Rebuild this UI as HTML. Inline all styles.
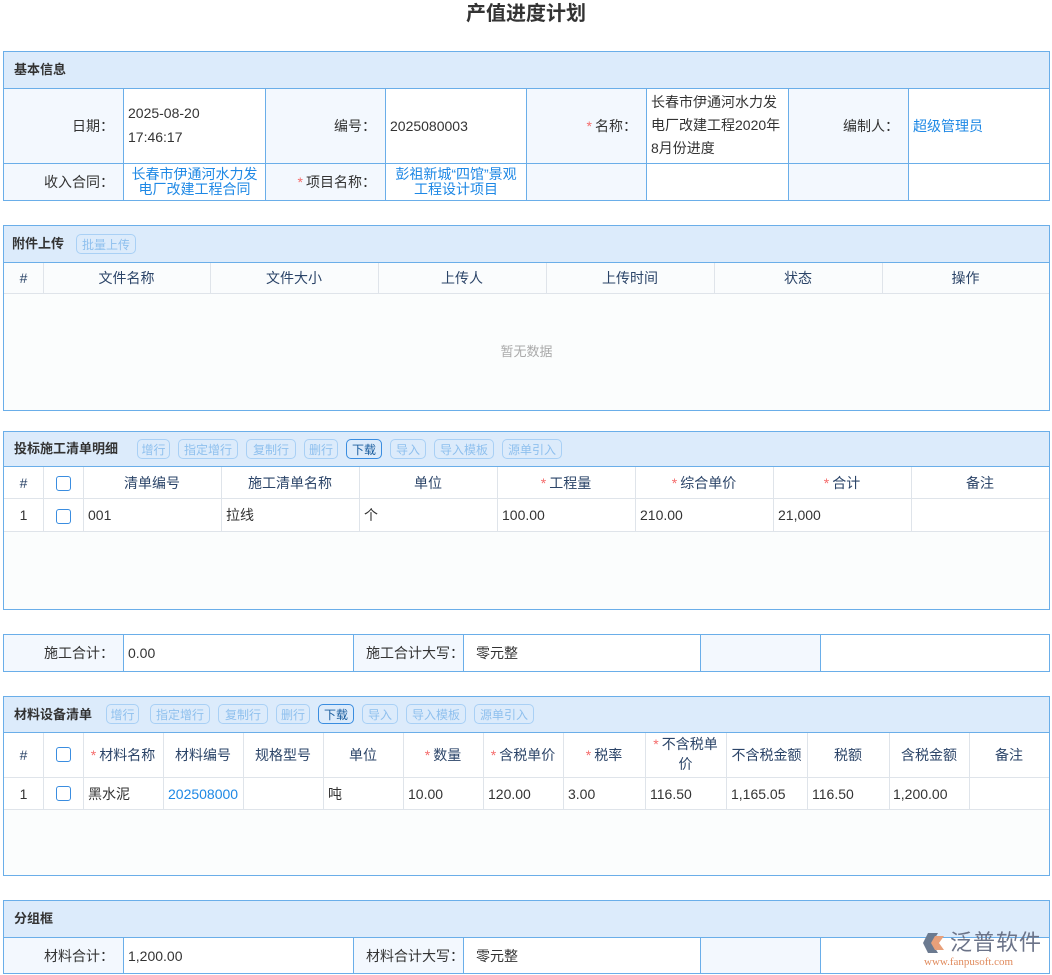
<!DOCTYPE html>
<html><head><meta charset="utf-8"><style>
body{margin:0;width:1052px;height:975px;background:#fff;position:relative;overflow:hidden;font-family:"Liberation Sans","Noto Sans CJK SC",sans-serif;font-size:14px;color:#333}
div{position:absolute;box-sizing:border-box}
.p{border:1px solid #6aaee9}
.hd{background:#dcebfb;border-bottom:1px solid #6aaee9}
.v{width:1px;background:#6aaee9}
.vg{width:1px;background:#dfe4ea}
.hl{height:1px;background:#6aaee9}
.hg{height:1px;background:#dfe4ea}
.lb{background:#f3f8fe}
.t{display:flex;align-items:center;white-space:nowrap;line-height:16px}
.r{justify-content:flex-end}
.c{justify-content:center}
.ttl{font-weight:bold;color:#333;font-size:13px}
.th{color:#2b4468}
.s{color:#f56c6c;margin-right:3px}
.bl{color:#1e88e5}
.b{height:20px;border:1px solid #a9d0f5;border-radius:5px;color:#8fc0ee;font-size:12px;display:flex;align-items:center;justify-content:center}
.bd{border-color:#3a8de0;color:#1a5d9e}
.cb{width:15px;height:15px;border:1px solid #3a8de0;border-radius:3px;background:#fff}
</style></head><body>
<div class="t c" style="left:0;top:0;width:1052px;height:28px;font-size:20px;font-weight:bold;color:#333">产值进度计划</div>

<!-- panel 1 -->
<div class="p" style="left:3px;top:51px;width:1047px;height:150px"></div>
<div class="hd" style="left:4px;top:52px;width:1045px;height:37px"></div>
<div class="t ttl" style="left:14px;top:52px;height:36px">基本信息</div>
<div class="lb" style="left:4px;top:89px;width:119px;height:111px"></div>
<div class="lb" style="left:266px;top:89px;width:119px;height:111px"></div>
<div class="lb" style="left:527px;top:89px;width:119px;height:111px"></div>
<div class="lb" style="left:789px;top:89px;width:119px;height:111px"></div>
<div class="hl" style="left:4px;top:163px;width:1045px"></div>
<div class="v" style="left:123px;top:89px;height:111px"></div>
<div class="v" style="left:265px;top:89px;height:111px"></div>
<div class="v" style="left:385px;top:89px;height:111px"></div>
<div class="v" style="left:526px;top:89px;height:111px"></div>
<div class="v" style="left:646px;top:89px;height:111px"></div>
<div class="v" style="left:788px;top:89px;height:111px"></div>
<div class="v" style="left:908px;top:89px;height:111px"></div>
<div class="t r" style="left:4px;top:89px;width:110px;height:74px">日期：</div>
<div style="left:128px;top:101px;line-height:24px">2025-08-20<br>17:46:17</div>
<div class="t r" style="left:266px;top:89px;width:110px;height:74px">编号：</div>
<div class="t" style="left:390px;top:89px;height:74px">2025080003</div>
<div class="t r" style="left:527px;top:89px;width:110px;height:74px"><span class="s">*</span>名称：</div>
<div style="left:651px;top:91px;line-height:23px;width:132px">长春市伊通河水力发电厂改建工程2020年8月份进度</div>
<div class="t r" style="left:789px;top:89px;width:110px;height:74px">编制人：</div>
<div class="t bl" style="left:913px;top:89px;height:74px">超级管理员</div>
<div class="t r" style="left:4px;top:164px;width:110px;height:36px">收入合同：</div>
<div class="bl" style="left:124px;top:167px;width:141px;text-align:center;line-height:15px">长春市伊通河水力发<br>电厂改建工程合同</div>
<div class="t r" style="left:266px;top:164px;width:110px;height:36px"><span class="s">*</span>项目名称：</div>
<div class="bl" style="left:386px;top:167px;width:140px;text-align:center;line-height:15px">彭祖新城“四馆”景观<br>工程设计项目</div>

<!-- panel 2 -->
<div class="p" style="left:3px;top:225px;width:1047px;height:186px;background:#fbfdfd"></div>
<div class="hd" style="left:4px;top:226px;width:1045px;height:37px"></div>
<div class="t ttl" style="left:12px;top:226px;height:36px">附件上传</div>
<div class="b" style="left:76px;top:234px;width:60px">批量上传</div>
<div style="left:4px;top:263px;width:1045px;height:30px;background:#fafcfd"></div>
<div class="hg" style="left:4px;top:293px;width:1045px"></div>
<div class="vg" style="left:43px;top:263px;height:30px"></div>
<div class="vg" style="left:210px;top:263px;height:30px"></div>
<div class="vg" style="left:378px;top:263px;height:30px"></div>
<div class="vg" style="left:546px;top:263px;height:30px"></div>
<div class="vg" style="left:714px;top:263px;height:30px"></div>
<div class="vg" style="left:882px;top:263px;height:30px"></div>
<div class="t c th" style="left:4px;top:263px;width:39px;height:30px">#</div>
<div class="t c th" style="left:43px;top:263px;width:167px;height:30px">文件名称</div>
<div class="t c th" style="left:210px;top:263px;width:168px;height:30px">文件大小</div>
<div class="t c th" style="left:378px;top:263px;width:168px;height:30px">上传人</div>
<div class="t c th" style="left:546px;top:263px;width:168px;height:30px">上传时间</div>
<div class="t c th" style="left:714px;top:263px;width:168px;height:30px">状态</div>
<div class="t c th" style="left:882px;top:263px;width:167px;height:30px">操作</div>
<div class="t c" style="left:4px;top:340px;width:1045px;height:24px;color:#aaa;font-size:13px">暂无数据</div>

<!-- panel 3 -->
<div class="p" style="left:3px;top:431px;width:1047px;height:179px;background:#fbfdfd"></div>
<div class="hd" style="left:4px;top:432px;width:1045px;height:35px"></div>
<div class="t ttl" style="left:14px;top:432px;height:34px">投标施工清单明细</div>
<div class="b" style="left:137px;top:439px;width:33px">增行</div>
<div class="b" style="left:178px;top:439px;width:60px">指定增行</div>
<div class="b" style="left:246px;top:439px;width:50px">复制行</div>
<div class="b" style="left:304px;top:439px;width:34px">删行</div>
<div class="b bd" style="left:346px;top:439px;width:36px">下载</div>
<div class="b" style="left:390px;top:439px;width:36px">导入</div>
<div class="b" style="left:434px;top:439px;width:60px">导入模板</div>
<div class="b" style="left:502px;top:439px;width:60px">源单引入</div>
<div style="left:4px;top:467px;width:1045px;height:64px;background:#fff"></div>
<div class="hg" style="left:4px;top:498px;width:1045px"></div>
<div class="hg" style="left:4px;top:531px;width:1045px"></div>
<div class="vg" style="left:43px;top:467px;height:64px"></div>
<div class="vg" style="left:83px;top:467px;height:64px"></div>
<div class="vg" style="left:221px;top:467px;height:64px"></div>
<div class="vg" style="left:359px;top:467px;height:64px"></div>
<div class="vg" style="left:497px;top:467px;height:64px"></div>
<div class="vg" style="left:635px;top:467px;height:64px"></div>
<div class="vg" style="left:773px;top:467px;height:64px"></div>
<div class="vg" style="left:911px;top:467px;height:64px"></div>
<div class="t c th" style="left:4px;top:467px;width:39px;height:31px">#</div>
<div class="cb" style="left:56px;top:476px"></div>
<div class="t c th" style="left:83px;top:467px;width:138px;height:31px">清单编号</div>
<div class="t c th" style="left:221px;top:467px;width:138px;height:31px">施工清单名称</div>
<div class="t c th" style="left:359px;top:467px;width:138px;height:31px">单位</div>
<div class="t c th" style="left:497px;top:467px;width:138px;height:31px"><span class="s">*</span>工程量</div>
<div class="t c th" style="left:635px;top:467px;width:138px;height:31px"><span class="s">*</span>综合单价</div>
<div class="t c th" style="left:773px;top:467px;width:138px;height:31px"><span class="s">*</span>合计</div>
<div class="t c th" style="left:911px;top:467px;width:138px;height:31px">备注</div>
<div class="t c" style="left:4px;top:499px;width:39px;height:32px">1</div>
<div class="cb" style="left:56px;top:509px"></div>
<div class="t" style="left:88px;top:499px;height:32px">001</div>
<div class="t" style="left:226px;top:499px;height:32px">拉线</div>
<div class="t" style="left:364px;top:499px;height:32px">个</div>
<div class="t" style="left:502px;top:499px;height:32px">100.00</div>
<div class="t" style="left:640px;top:499px;height:32px">210.00</div>
<div class="t" style="left:778px;top:499px;height:32px">21,000</div>

<!-- panel 4 -->
<div class="p" style="left:3px;top:634px;width:1047px;height:38px"></div>
<div class="lb" style="left:4px;top:635px;width:119px;height:36px"></div>
<div class="lb" style="left:354px;top:635px;width:109px;height:36px"></div>
<div class="lb" style="left:701px;top:635px;width:119px;height:36px"></div>
<div class="v" style="left:123px;top:635px;height:36px"></div>
<div class="v" style="left:353px;top:635px;height:36px"></div>
<div class="v" style="left:463px;top:635px;height:36px"></div>
<div class="v" style="left:700px;top:635px;height:36px"></div>
<div class="v" style="left:820px;top:635px;height:36px"></div>
<div class="t r" style="left:4px;top:635px;width:110px;height:36px">施工合计：</div>
<div class="t" style="left:128px;top:635px;height:36px">0.00</div>
<div class="t r" style="left:354px;top:635px;width:110px;height:36px">施工合计大写：</div>
<div class="t" style="left:476px;top:635px;height:36px">零元整</div>

<!-- panel 5 -->
<div class="p" style="left:3px;top:696px;width:1047px;height:180px;background:#fbfdfd"></div>
<div class="hd" style="left:4px;top:697px;width:1045px;height:36px"></div>
<div class="t ttl" style="left:14px;top:697px;height:35px">材料设备清单</div>
<div class="b" style="left:106px;top:704px;width:33px">增行</div>
<div class="b" style="left:150px;top:704px;width:60px">指定增行</div>
<div class="b" style="left:218px;top:704px;width:50px">复制行</div>
<div class="b" style="left:276px;top:704px;width:34px">删行</div>
<div class="b bd" style="left:318px;top:704px;width:36px">下载</div>
<div class="b" style="left:362px;top:704px;width:36px">导入</div>
<div class="b" style="left:406px;top:704px;width:60px">导入模板</div>
<div class="b" style="left:474px;top:704px;width:60px">源单引入</div>
<div style="left:4px;top:733px;width:1045px;height:76px;background:#fff"></div>
<div class="hg" style="left:4px;top:777px;width:1045px"></div>
<div class="hg" style="left:4px;top:809px;width:1045px"></div>
<div class="vg" style="left:43px;top:733px;height:76px"></div>
<div class="vg" style="left:83px;top:733px;height:76px"></div>
<div class="vg" style="left:163px;top:733px;height:76px"></div>
<div class="vg" style="left:243px;top:733px;height:76px"></div>
<div class="vg" style="left:323px;top:733px;height:76px"></div>
<div class="vg" style="left:403px;top:733px;height:76px"></div>
<div class="vg" style="left:483px;top:733px;height:76px"></div>
<div class="vg" style="left:563px;top:733px;height:76px"></div>
<div class="vg" style="left:645px;top:733px;height:76px"></div>
<div class="vg" style="left:726px;top:733px;height:76px"></div>
<div class="vg" style="left:807px;top:733px;height:76px"></div>
<div class="vg" style="left:889px;top:733px;height:76px"></div>
<div class="vg" style="left:969px;top:733px;height:76px"></div>
<div class="t c th" style="left:4px;top:733px;width:39px;height:44px">#</div>
<div class="cb" style="left:56px;top:747px"></div>
<div class="t c th" style="left:83px;top:733px;width:80px;height:44px"><span class="s">*</span>材料名称</div>
<div class="t c th" style="left:163px;top:733px;width:80px;height:44px">材料编号</div>
<div class="t c th" style="left:243px;top:733px;width:80px;height:44px">规格型号</div>
<div class="t c th" style="left:323px;top:733px;width:80px;height:44px">单位</div>
<div class="t c th" style="left:403px;top:733px;width:80px;height:44px"><span class="s">*</span>数量</div>
<div class="t c th" style="left:483px;top:733px;width:80px;height:44px"><span class="s">*</span>含税单价</div>
<div class="t c th" style="left:563px;top:733px;width:82px;height:44px"><span class="s">*</span>税率</div>
<div class="th" style="left:645px;top:734px;width:81px;text-align:center;line-height:20px"><span class="s">*</span>不含税单<br>价</div>
<div class="t c th" style="left:726px;top:733px;width:81px;height:44px">不含税金额</div>
<div class="t c th" style="left:807px;top:733px;width:82px;height:44px">税额</div>
<div class="t c th" style="left:889px;top:733px;width:80px;height:44px">含税金额</div>
<div class="t c th" style="left:969px;top:733px;width:80px;height:44px">备注</div>
<div class="t c" style="left:4px;top:778px;width:39px;height:31px">1</div>
<div class="cb" style="left:56px;top:786px"></div>
<div class="t" style="left:88px;top:778px;height:31px">黑水泥</div>
<div class="t bl" style="left:168px;top:778px;width:71px;height:31px;overflow:hidden">2025080001</div>
<div class="t" style="left:328px;top:778px;height:31px">吨</div>
<div class="t" style="left:408px;top:778px;height:31px">10.00</div>
<div class="t" style="left:488px;top:778px;height:31px">120.00</div>
<div class="t" style="left:568px;top:778px;height:31px">3.00</div>
<div class="t" style="left:650px;top:778px;height:31px">116.50</div>
<div class="t" style="left:731px;top:778px;height:31px">1,165.05</div>
<div class="t" style="left:812px;top:778px;height:31px">116.50</div>
<div class="t" style="left:893px;top:778px;height:31px">1,200.00</div>

<!-- panel 6 -->
<div class="p" style="left:3px;top:900px;width:1047px;height:74px"></div>
<div class="hd" style="left:4px;top:901px;width:1045px;height:37px"></div>
<div class="t ttl" style="left:14px;top:901px;height:36px">分组框</div>
<div class="lb" style="left:4px;top:938px;width:119px;height:35px"></div>
<div class="lb" style="left:354px;top:938px;width:109px;height:35px"></div>
<div class="lb" style="left:701px;top:938px;width:119px;height:35px"></div>
<div class="v" style="left:123px;top:938px;height:35px"></div>
<div class="v" style="left:353px;top:938px;height:35px"></div>
<div class="v" style="left:463px;top:938px;height:35px"></div>
<div class="v" style="left:700px;top:938px;height:35px"></div>
<div class="v" style="left:820px;top:938px;height:35px"></div>
<div class="t r" style="left:4px;top:938px;width:110px;height:35px">材料合计：</div>
<div class="t" style="left:128px;top:938px;height:35px">1,200.00</div>
<div class="t r" style="left:354px;top:938px;width:110px;height:35px">材料合计大写：</div>
<div class="t" style="left:476px;top:938px;height:35px">零元整</div>

<!-- logo -->
<svg style="position:absolute;left:922px;top:930px" width="26" height="26" viewBox="0 0 26 26"><path d="M6 3 L16 3 L10 13 L16 23 L6 23 L1 13 Z" fill="#6b7a90"/><path d="M13 6 L22 6 L17 13 L22 20 L13 20 L9 13 Z" fill="#e8a07a"/></svg>
<div class="t" style="left:950px;top:930px;height:26px;font-size:22px;color:#6b7388;letter-spacing:1px">泛普软件</div>
<div class="t" style="left:924px;top:955px;height:14px;font-size:11px;color:#e08a5c;font-family:'Liberation Serif',serif">www.fanpusoft.com</div>
</body></html>
